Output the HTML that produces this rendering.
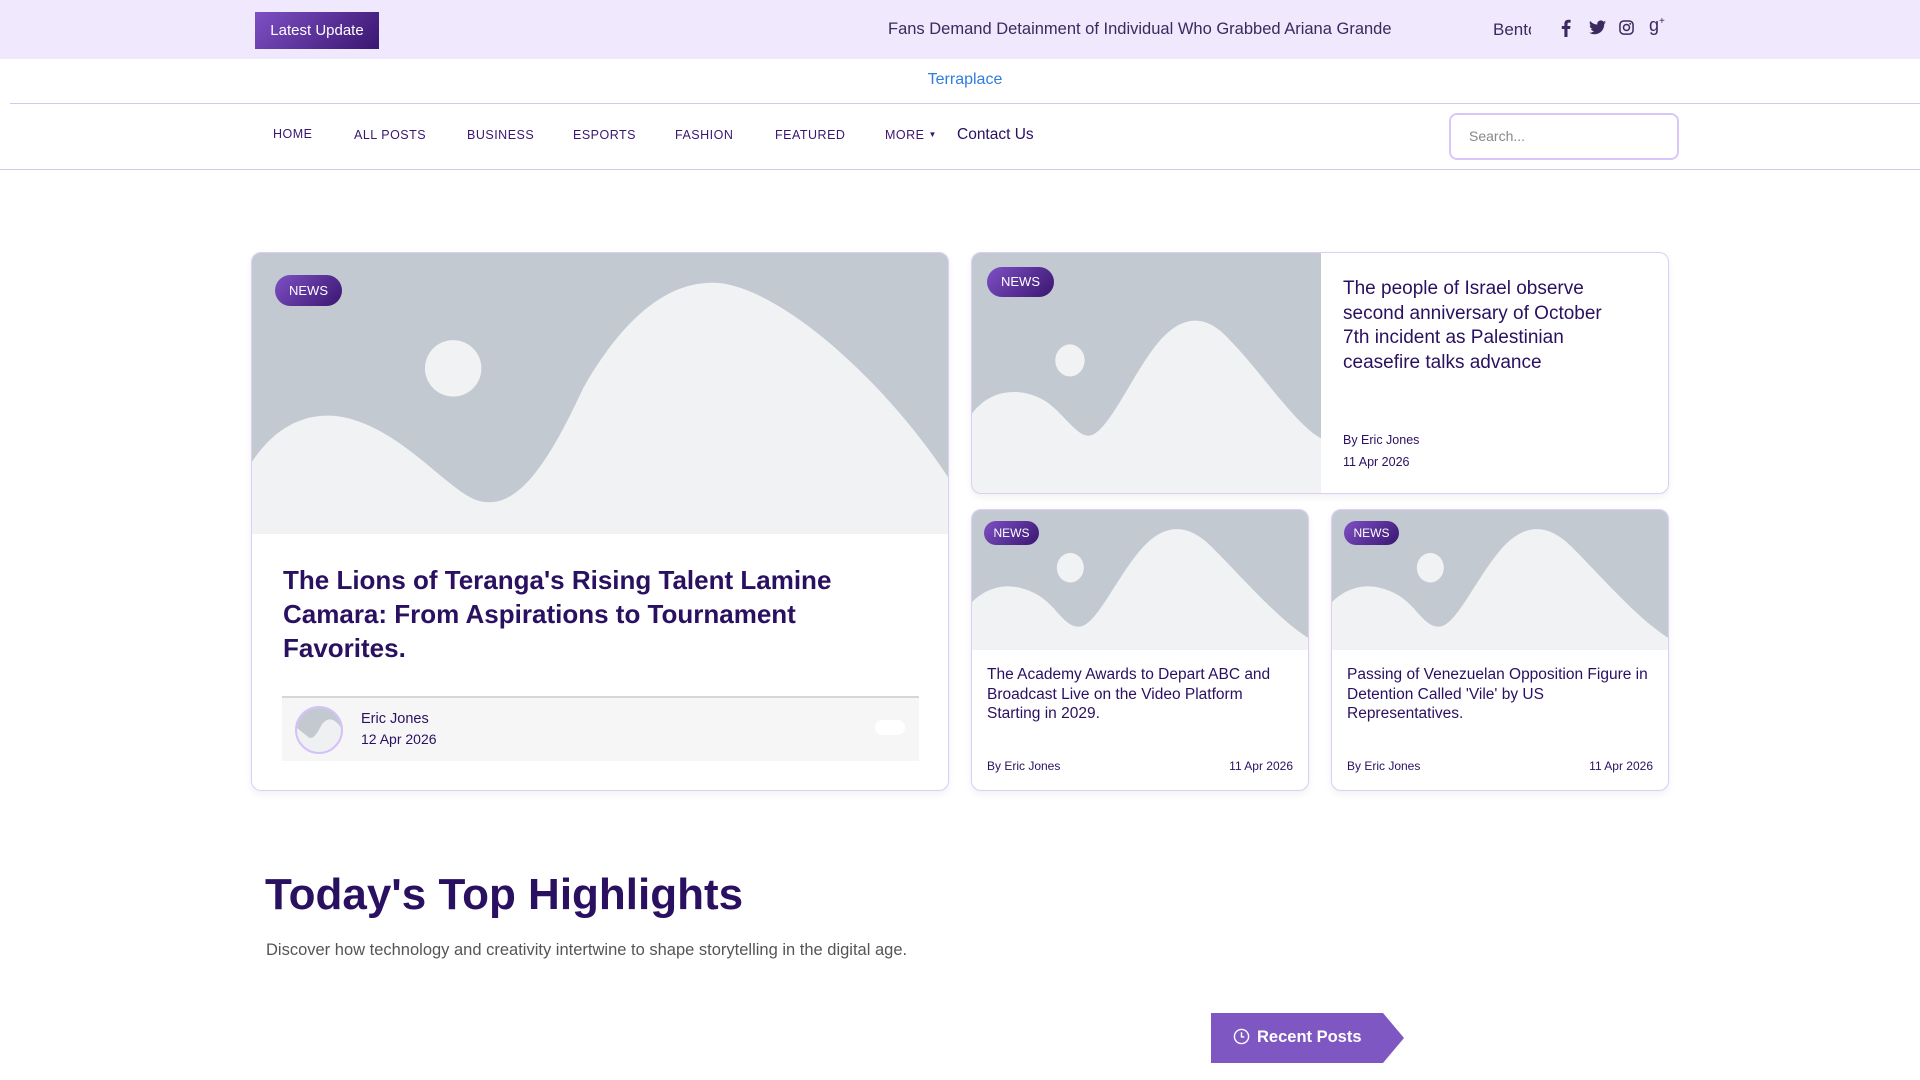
<!DOCTYPE html>
<html><head><meta charset="utf-8">
<style>
*{box-sizing:border-box;margin:0;padding:0}
body{width:1920px;height:1080px;overflow:hidden;background:#fff;font-family:"Liberation Sans",sans-serif;color:#2a1060;position:relative}
.a{position:absolute}
.top{left:0;top:0;width:1920px;height:59px;background:#f0e8fd}
.btn{left:255px;top:12px;width:124px;height:37px;background:linear-gradient(135deg,#7e50c4,#3a1670);color:#fff;font-size:15px;line-height:37px;text-align:center}
.tick{left:888px;top:20px;font-size:16.5px;color:#3a2a5e;white-space:nowrap}
.line{background:#d6c6f3;height:1px}
.nav{top:128px;font-size:12.5px;letter-spacing:.5px;color:#3a1670}
.search{left:1449px;top:113px;width:230px;height:47px;border:2px solid #d9c7fb;border-radius:8px;padding-left:18px;line-height:43px;font-size:14px;color:#888}
.card{background:#fff;border:1px solid #ddcdf8;border-radius:10px;overflow:hidden;box-shadow:0 3px 8px rgba(0,0,0,.06)}
.badge{background:linear-gradient(135deg,#7e50c4,#3a1670);color:#fff;border-radius:16px;text-align:center}
svg{display:block}
</style></head><body>
<div class="a top"></div>
<div class="a btn">Latest Update</div>
<div class="a tick">Fans Demand Detainment of Individual Who Grabbed Ariana Grande</div>
<div class="a" style="left:1493px;top:20px;font-size:17px;color:#3a2a5e;width:38px;overflow:hidden;white-space:nowrap">Bento</div>
<svg class="a" style="left:1561px;top:19px" width="10" height="18" viewBox="0 0 10 18"><path d="M6.5 18V10h2.6l.4-3H6.5V5.1c0-.9.3-1.5 1.5-1.5h1.6V.9C9.3.8 8.4.7 7.3.7 5 .7 3.4 2.1 3.4 4.7V7H.8v3h2.6v8z" fill="#3a2a5e"/></svg>
<svg class="a" style="left:1589px;top:20px" width="17" height="15" viewBox="0 0 24 20"><path d="M24 2.4a10 10 0 0 1-2.8.8A5 5 0 0 0 23.3.5a10 10 0 0 1-3.1 1.2A4.9 4.9 0 0 0 11.8 6 14 14 0 0 1 1.7.9a4.9 4.9 0 0 0 1.5 6.6A4.9 4.9 0 0 1 1 6.9a4.9 4.9 0 0 0 3.9 4.8 5 5 0 0 1-2.2.1 4.9 4.9 0 0 0 4.6 3.4A9.9 9.9 0 0 1 0 17.3 14 14 0 0 0 7.5 19.5c9.1 0 14-7.5 14-14v-.6A10 10 0 0 0 24 2.4z" fill="#3a2a5e"/></svg>
<svg class="a" style="left:1619px;top:20px" width="15" height="15" viewBox="0 0 16 16"><rect x="1" y="1" width="14" height="14" rx="4" fill="none" stroke="#3a2a5e" stroke-width="1.6"/><circle cx="8" cy="8" r="3.2" fill="none" stroke="#3a2a5e" stroke-width="1.6"/><circle cx="12" cy="4" r="1" fill="#3a2a5e"/></svg>
<div class="a" style="left:1649px;top:15px;font-size:18px;color:#3a2a5e">g<sup style="font-size:10px">+</sup></div>
<div class="a" style="left:0;top:71px;width:1930px;text-align:center;font-size:16px;color:#2f7de1">Terraplace</div>
<div class="a line" style="left:10px;top:103px;width:1910px"></div>
<div class="a nav" style="left:273px;top:127px">HOME</div>
<div class="a nav" style="left:354px">ALL POSTS</div>
<div class="a nav" style="left:467px">BUSINESS</div>
<div class="a nav" style="left:573px">ESPORTS</div>
<div class="a nav" style="left:675px">FASHION</div>
<div class="a nav" style="left:775px">FEATURED</div>
<div class="a nav" style="left:885px">MORE <span style="font-size:8px;vertical-align:2px">▼</span></div>
<div class="a" style="left:957px;top:126px;font-size:15.5px;color:#2a1060">Contact Us</div>
<div class="a search">Search...</div>
<div class="a line" style="left:0;top:169px;width:1920px"></div>

<div class="a card" style="left:251px;top:252px;width:698px;height:539px">
<svg width="698" height="281" viewBox="0 0 569 229" preserveAspectRatio="none"><rect width="569" height="229" fill="#c2c9d1"/><circle cx="164" cy="94" r="23" fill="#f1f2f4"/><path d="M0,170 C20,140 45,130 70,133 C120,140 160,195 185,202 C215,210 240,175 270,110 C310,40 350,20 385,25 C440,35 520,110 569,185 L569,229 L0,229Z" fill="#f1f2f4"/></svg>
<div class="a badge" style="left:23px;top:22px;width:67px;height:31px;line-height:31px;font-size:13px">NEWS</div>
<div class="a" style="left:31px;top:310px;width:620px;font-size:26px;font-weight:bold;line-height:34px;color:#2a1060">The Lions of Teranga's Rising Talent Lamine Camara: From Aspirations to Tournament Favorites.</div>
<div class="a" style="left:30px;top:443px;width:637px;height:65px;background:#f6f6f7;border-top:2px solid #d6d6d8">
<div class="a" style="left:13px;top:8px;width:48px;height:48px;border-radius:50%;border:2px solid #d5c0fa;overflow:hidden;background:#eef0f2"><svg width="44" height="44" viewBox="0 0 44 44"><path d="M0 0H44V20C38 10 30 8 24 18 18 30 14 32 10 28L0 20Z" fill="#c2c9d1"/></svg></div>
<div class="a" style="left:79px;top:13px;font-size:14.5px;color:#2a1060">Eric Jones</div>
<div class="a" style="left:79px;top:33px;font-size:14px;color:#2a1060">12 Apr 2026</div>
<div class="a" style="left:593px;top:22px;width:30px;height:15px;border-radius:8px;background:#fff"></div>
</div></div>

<div class="a card" style="left:971px;top:252px;width:698px;height:242px">
<svg class="a" style="left:0;top:0" width="349" height="242" viewBox="0 0 285 196" preserveAspectRatio="none"><rect width="285" height="196" fill="#c2c9d1"/><ellipse cx="80" cy="87" rx="12" ry="13" fill="#f1f2f4"/><path d="M0,130 C15,110 40,108 60,120 C75,130 85,148 95,148 C110,148 130,100 150,75 C170,50 190,48 210,70 C235,95 265,140 285,150 L285,196 L0,196Z" fill="#f1f2f4"/></svg>
<div class="a badge" style="left:15px;top:14px;width:67px;height:30px;line-height:30px;font-size:13px">NEWS</div>
<div class="a" style="left:371px;top:24px;width:285px;font-size:19px;line-height:24.5px;color:#2a1060">The people of Israel observe second anniversary of October 7th incident as Palestinian ceasefire talks advance</div>
<div class="a" style="left:371px;top:180px;font-size:12.5px;color:#2a1060">By Eric Jones</div>
<div class="a" style="left:371px;top:202px;font-size:12.5px;color:#2a1060">11 Apr 2026</div>
</div>

<div class="a card" style="left:971px;top:509px;width:338px;height:282px">
<svg width="338" height="140" viewBox="0 0 275 114" preserveAspectRatio="none"><rect width="275" height="114" fill="#c2c9d1"/><ellipse cx="80" cy="47" rx="11" ry="12" fill="#f1f2f4"/><path d="M0,75 C15,60 35,58 55,70 C70,80 75,95 87,95 C100,95 115,60 135,35 C155,10 175,10 195,30 C220,55 250,90 275,105 L275,114 L0,114Z" fill="#f1f2f4"/></svg>
<div class="a badge" style="left:12px;top:11px;width:55px;height:24px;line-height:24px;font-size:12px;border-radius:12px">NEWS</div>
<div class="a" style="left:15px;top:155px;width:300px;font-size:15.5px;line-height:19.5px;color:#2a1060">The Academy Awards to Depart ABC and Broadcast Live on the Video Platform Starting in 2029.</div>
<div class="a" style="left:15px;top:249px;font-size:12px;color:#2a1060">By Eric Jones</div>
<div class="a" style="right:15px;top:249px;font-size:12px;color:#2a1060">11 Apr 2026</div>
</div>
<div class="a card" style="left:1331px;top:509px;width:338px;height:282px">
<svg width="338" height="140" viewBox="0 0 275 114" preserveAspectRatio="none"><rect width="275" height="114" fill="#c2c9d1"/><ellipse cx="80" cy="47" rx="11" ry="12" fill="#f1f2f4"/><path d="M0,75 C15,60 35,58 55,70 C70,80 75,95 87,95 C100,95 115,60 135,35 C155,10 175,10 195,30 C220,55 250,90 275,105 L275,114 L0,114Z" fill="#f1f2f4"/></svg>
<div class="a badge" style="left:12px;top:11px;width:55px;height:24px;line-height:24px;font-size:12px;border-radius:12px">NEWS</div>
<div class="a" style="left:15px;top:155px;width:315px;font-size:15.5px;line-height:19.5px;color:#2a1060">Passing of Venezuelan Opposition Figure in Detention Called 'Vile' by US Representatives.</div>
<div class="a" style="left:15px;top:249px;font-size:12px;color:#2a1060">By Eric Jones</div>
<div class="a" style="right:15px;top:249px;font-size:12px;color:#2a1060">11 Apr 2026</div>
</div>

<div class="a" style="left:265px;top:870px;font-size:44px;font-weight:bold;color:#2a1060">Today's Top Highlights</div>
<div class="a" style="left:266px;top:941px;font-size:16.5px;color:#555">Discover how technology and creativity intertwine to shape storytelling in the digital age.</div>

<div class="a" style="left:1211px;top:1013px;width:193px;height:50px;background:#7e57c2;clip-path:polygon(0 0,172px 0,193px 50%,172px 100%,0 100%)"></div>
<svg class="a" style="left:1233px;top:1028px" width="17" height="17" viewBox="0 0 18 18"><circle cx="9" cy="9" r="7.5" fill="none" stroke="#fff" stroke-width="1.5"/><path d="M9 4.5V9.5H12" fill="none" stroke="#fff" stroke-width="1.5"/></svg>
<div class="a" style="left:1257px;top:1028px;font-size:16.5px;font-weight:bold;color:#fff">Recent Posts</div>
</body></html>
